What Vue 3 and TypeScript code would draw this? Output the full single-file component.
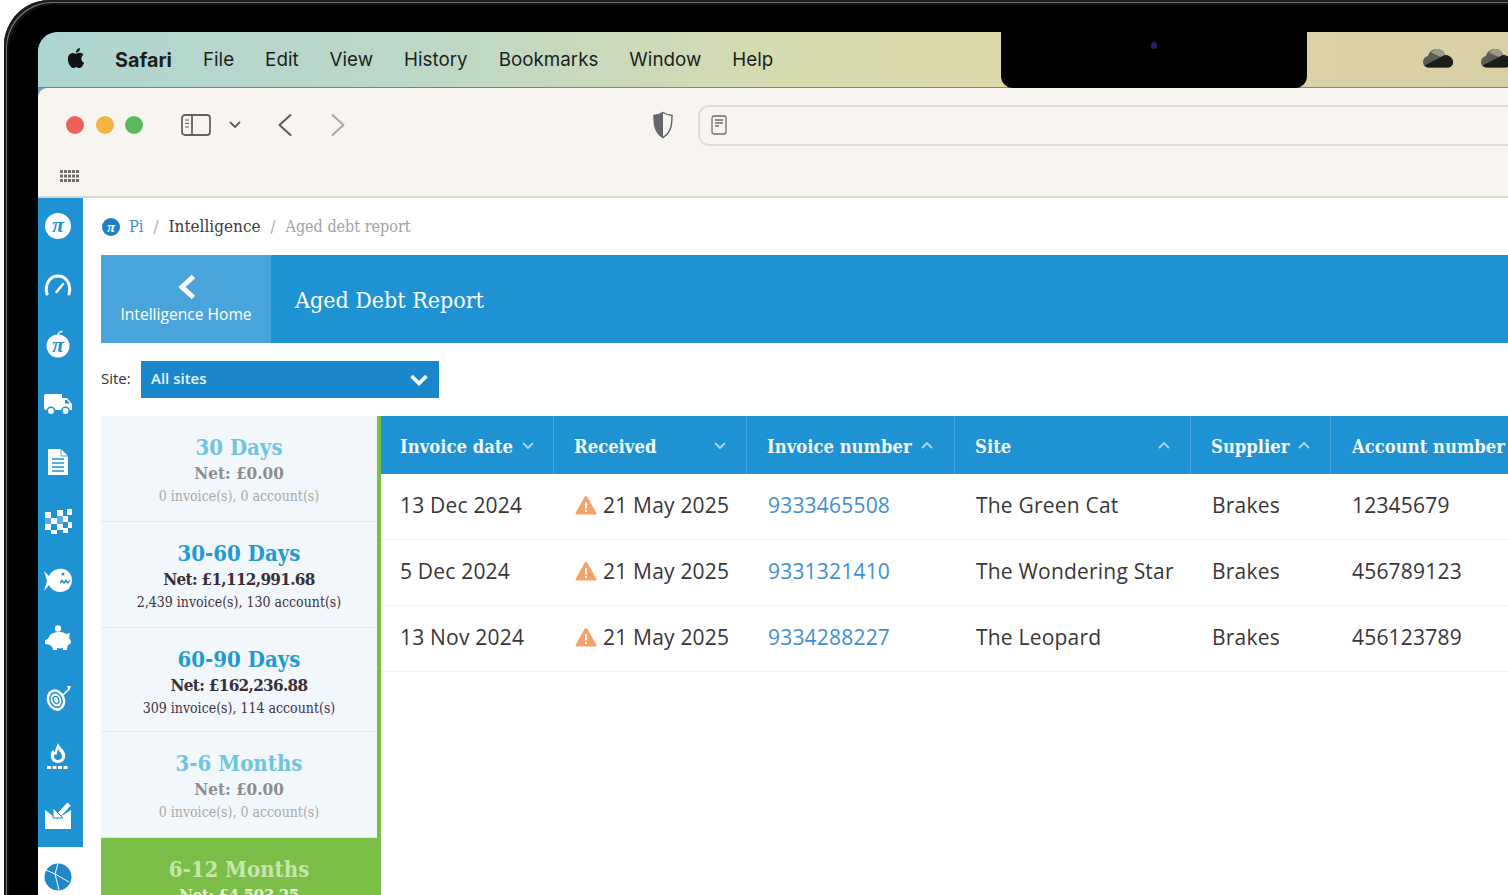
<script setup lang="ts">
interface Card { title: string; net: string; sub: string; state: 'dim' | 'on' | 'sel' }
const menus: string[] = ['File', 'Edit', 'View', 'History', 'Bookmarks', 'Window', 'Help']
const cards: Card[] = [
  { title: '30 Days', net: 'Net: £0.00', sub: '0 invoice(s), 0 account(s)', state: 'dim' },
  { title: '30-60 Days', net: 'Net: £1,112,991.68', sub: '2,439 invoice(s), 130 account(s)', state: 'on' },
  { title: '60-90 Days', net: 'Net: £162,236.88', sub: '309 invoice(s), 114 account(s)', state: 'on' },
  { title: '3-6 Months', net: 'Net: £0.00', sub: '0 invoice(s), 0 account(s)', state: 'dim' },
  { title: '6-12 Months', net: 'Net: £4,503.25', sub: '', state: 'sel' }
]
const heads = [
  { t: 'Invoice date', dir: 'down', spread: false },
  { t: 'Received', dir: 'down', spread: true },
  { t: 'Invoice number', dir: 'up', spread: false },
  { t: 'Site', dir: 'up', spread: true },
  { t: 'Supplier', dir: 'up', spread: false },
  { t: 'Account number', dir: '', spread: false }
]
const rows = [
  ['13 Dec 2024', '21 May 2025', '9333465508', 'The Green Cat', 'Brakes', '12345679'],
  ['5 Dec 2024', '21 May 2025', '9331321410', 'The Wondering Star', 'Brakes', '456789123'],
  ['13 Nov 2024', '21 May 2025', '9334288227', 'The Leopard', 'Brakes', '456123789']
]
</script>

<template>
  <div class="device">
    <div class="screen">
      <header class="menubar">
        <svg class="apple" viewBox="0 0 24 24" width="24" height="24"><path fill="#111" d="M18.710 19.500c-.83 1.240-1.710 2.450-3.050 2.470-1.340.03-1.770-.79-3.290-.79-1.530 0-2 .77-3.270.82-1.310.05-2.300-1.320-3.140-2.530C4.250 17 2.940 12.450 4.700 9.390c.87-1.520 2.430-2.480 4.120-2.510 1.280-.02 2.500.87 3.290.87.78 0 2.260-1.070 3.810-.91.65.03 2.470.26 3.640 1.980-.09.06-2.170 1.280-2.150 3.810.03 3.020 2.650 4.030 2.680 4.040-.03.07-.42 1.440-1.380 2.830M13 3.500c.73-.83 1.940-1.460 2.940-1.500.13 1.170-.34 2.350-1.040 3.190-.69.85-1.830 1.510-2.950 1.420-.15-1.150.41-2.350 1.050-3.110z"/></svg>
        <span class="app">Safari</span>
        <span v-for="m in menus" :key="m" class="menu">{{ m }}</span>
        <div class="clouds">
          <svg v-for="i in 2" :key="i" viewBox="0 0 30 20" width="30" height="20">
            <path fill="#5b5c52" d="M6 19.500C2 19.500 0 17 0 14c0-3 2-5.500 5-6C6 3.500 10 1 14 1c4 0 7 2 8 6 4 0 8 3 8 7 0 3-2 5.500-5 5.500z"/>
            <path fill="#9b9a87" d="M8 4.500C10 2 12 1 14 1c4 0 7 2 8 6l-4 2z"/>
            <path fill="#1c1d1b" d="M6 19.500c-2 0-3.500-.7-4.500-2L18 9l4-2c4 0 8 3 8 7 0 3-2 5.500-5 5.500z"/>
          </svg>
        </div>
      </header>
      <div class="notch"><i class="cam"></i></div>

      <div class="chrome">
        <div class="toolbar">
          <div class="lights"><i class="red"></i><i class="amber"></i><i class="green"></i></div>
          <svg class="side-ic" viewBox="0 0 30 24" width="30" height="24" fill="none" stroke="#626262" stroke-width="1.800">
            <rect x="1" y="2" width="28" height="20" rx="3"/><path d="M11 2v20"/>
            <path d="M4 7h4M4 10.500h4M4 14h4" stroke-width="1.200"/>
          </svg>
          <svg class="mini" viewBox="0 0 12 8" width="12" height="8" fill="none" stroke="#606060" stroke-width="1.800" stroke-linecap="round" stroke-linejoin="round"><path d="M1.500 1.500 6 6l4.500-4.500"/></svg>
          <svg class="nav" viewBox="0 0 16 24" width="16" height="24" fill="none" stroke="#5c5c5c" stroke-width="2" stroke-linecap="round" stroke-linejoin="round"><path d="M13.500 2 2.500 12l11 10"/></svg>
          <svg class="nav fwd" viewBox="0 0 16 24" width="16" height="24" fill="none" stroke="#a9a7a3" stroke-width="2" stroke-linecap="round" stroke-linejoin="round"><path d="M2.500 2 13.500 12l-11 10"/></svg>
          <svg class="shield" viewBox="0 0 22 28" width="22" height="28">
            <path fill="#f7f4ef" stroke="#66676a" stroke-width="1.500" d="M11 1.500c3 2 6 2.500 9 3 0 9.500-1 17-9 22-8-5-9-12.500-9-22 3-.5 6-1 9-3z"/>
            <path fill="#66676a" d="M11 1.500c-3 2-6 2.500-9 3 0 9.500 1 17 9 22z"/>
          </svg>
          <div class="address">
            <svg viewBox="0 0 16 20" width="16" height="20" fill="none" stroke="#6d6d6d" stroke-width="1.300"><rect x="1" y="1" width="14" height="18" rx="2"/><path d="M4 5h8M4 8h8M4 11h4"/></svg>
          </div>
        </div>
        <div class="favs">
          <svg viewBox="0 0 20 14" width="20" height="14" fill="#6d6d6d">
            <template v-for="y in [1, 5.500, 10]" :key="y">
              <rect v-for="x in [0, 4, 8, 12, 16]" :key="x" :x="x" :y="y" width="3" height="3" rx=".6"/>
            </template>
          </svg>
        </div>
      </div>

      <div class="app-body">
        <aside class="rail">
          <div class="rail-blue">
            <svg viewBox="0 0 28 28" width="28" height="28"><circle cx="14" cy="14" r="13" fill="#fff"/><text x="14" y="20" text-anchor="middle" class="pi" fill="#1f92d3">π</text></svg>
            <svg viewBox="0 0 28 28" width="28" height="28" fill="none" stroke="#fff" stroke-width="3" stroke-linecap="round"><path d="M3 23C0 12 7 5 14 5s14 7 11 18"/><path d="M12.500 21 19 13" stroke-width="2.500"/></svg>
            <svg viewBox="0 0 28 28" width="28" height="28"><circle cx="14" cy="16" r="11.500" fill="#fff"/><path d="M14 5c0-2 2-3.500 4.500-3.500" fill="none" stroke="#fff" stroke-width="1.500"/><text x="14" y="22" text-anchor="middle" class="pi" fill="#1f92d3">π</text></svg>
            <svg viewBox="0 0 28 28" width="28" height="28"><path fill="#fff" d="M2 5h15c.6 0 1 .4 1 1v3h5l5 6v6H2c-1 0-2-.5-2-2V7c0-1 1-2 2-2z"/><circle cx="7" cy="22" r="3.700" fill="#fff" stroke="#1f92d3" stroke-width="1.500"/><circle cx="21.500" cy="22" r="3.700" fill="#fff" stroke="#1f92d3" stroke-width="1.500"/><path d="M21 11h2l3 3.500h-5z" fill="#1f92d3"/></svg>
            <svg viewBox="0 0 28 28" width="28" height="28"><path fill="#fff" d="M4 1h13l7 7v19H4z"/><path d="M8 11h12M8 15h12M8 19h12M8 23h12" stroke="#1f92d3" stroke-width="1.500"/><path d="M17 1v7h7" fill="none" stroke="#1f92d3" stroke-width=".8"/></svg>
            <svg viewBox="0 0 28 28" width="28" height="28" fill="#fff"><path d="M1 5h6v6H1zM13 3h6v6h-6zM23 2h5v6h-5zM7 11h6v6H7zM19 9h5v6h-5zM1 17h6v6H1zM13 17h6v6h-6zM24 15h4v6h-4zM7 23h6v4H7zM19 21h5v5h-5z"/><path d="M1 11h6v6H1zM13 9h6v8h-6z" opacity=".25"/></svg>
            <svg viewBox="0 0 28 28" width="28" height="28"><path fill="#fff" d="M0 5l5 5c3-6 9-8 14-7 5 1 9 5 9 11 0 7-5 12-12 12-5 0-9-3-11-7l-5 6 3-10z"/><circle cx="19" cy="8" r="1.500" fill="#1f92d3"/><path d="M16 16l2-3 2 3 2-3 2 3 2-3v2l-2 3-2-2-2 2-2-2-2 2z" fill="#1f92d3"/></svg>
            <svg viewBox="0 0 28 28" width="28" height="28" fill="#fff"><circle cx="14" cy="3.500" r="3.200"/><path d="M6 10c2-2 5-3 9-3 3 0 5 .5 7 2l4-1-1 5c1 1 2 3 2 4 0 2-2 2-3 3-.5 2-1 3-1 5h-4v-2c-2 .5-4 .5-6 0v2H9c0-2-1-3-3-5-1 0-3-1-5-1v-4c2 0 4-2 5-5z"/></svg>
            <svg viewBox="0 0 28 28" width="28" height="28"><g transform="rotate(-22 12 16)"><ellipse cx="12" cy="16" rx="9" ry="11" fill="#fff"/><ellipse cx="12" cy="16" rx="5.800" ry="7.500" fill="none" stroke="#1f92d3" stroke-width="1.500"/><ellipse cx="12" cy="16" rx="2.800" ry="3.600" fill="none" stroke="#1f92d3" stroke-width="1.300"/></g><path d="M18 12 25 5" stroke="#fff" stroke-width="1.500"/><path d="M23 2h4l-2 5z" fill="#fff"/></svg>
            <svg viewBox="0 0 28 28" width="28" height="28"><path fill="#fff" d="M14 0c1 4 6 6 7 11 1 5-2 9-7 9s-8-4-7-9c0-2 1-3 2-4 1 1 1 2 2 2 0-3 2-6 3-9z"/><path fill="#1f92d3" d="M14 5c0 3 4 5 4 8.500 0 2-2 3.500-4 3.500s-4-1.500-4-3.500c0-1 .5-2 1-2.500.5.5 1 1 1.500 1 0-2 1.500-4 1.500-7z"/><path d="M3 24.500h22" stroke="#fff" stroke-width="3" stroke-dasharray="4 1.500"/></svg>
            <svg viewBox="0 0 28 28" width="28" height="28" fill="#fff"><path d="M1 8l12 9 14-9v19H1z"/><path d="M15 13 25 2" stroke="#fff" stroke-width="4.500" fill="none"/><path d="M9 6v10h10z" stroke="#1f92d3" stroke-width="1"/></svg>
          </div>
          <div class="rail-white">
            <svg viewBox="0 0 28 28" width="28" height="28"><circle cx="14" cy="14" r="13.500" fill="#1f86c8"/><path d="M14 .5 11 11l14 8M11 11 2 7M11 11l4 16" fill="none" stroke="#fff" stroke-width="1"/></svg>
          </div>
        </aside>

        <main class="main">
          <nav class="crumbs">
            <svg viewBox="0 0 18 18" width="18" height="18"><circle cx="9" cy="9" r="9" fill="#1f7fc4"/><text x="9" y="13.500" text-anchor="middle" class="pi-s" fill="#fff">π</text></svg>
            <span class="pi-link">Pi</span><span class="sep">/</span><span class="cur">Intelligence</span><span class="sep">/</span><span class="leaf">Aged debt report</span>
          </nav>

          <section class="banner">
            <div class="back">
              <svg viewBox="0 0 20 26" width="20" height="26" fill="none" stroke="#fff" stroke-width="5" stroke-linejoin="miter"><path d="M17.500 2.500 6 13l11.500 10.500"/></svg>
              <span>Intelligence Home</span>
            </div>
            <h1>Aged Debt Report</h1>
          </section>

          <div class="site-row">
            <label>Site:</label>
            <div class="select">
              <span>All sites</span>
              <svg viewBox="0 0 18 12" width="18" height="12" fill="none" stroke="#fff" stroke-width="3.600"><path d="M1.500 2 9 9.500 16.500 2"/></svg>
            </div>
          </div>

          <div class="panel">
            <div class="cards">
              <div v-for="c in cards" :key="c.title" class="card" :class="c.state">
                <div class="c-title">{{ c.title }}</div>
                <div class="c-net">{{ c.net }}</div>
                <div v-if="c.sub" class="c-sub">{{ c.sub }}</div>
              </div>
            </div>
            <div class="table">
              <div class="thead">
                <div v-for="h in heads" :key="h.t" class="th" :class="{ spread: h.spread }">
                  <span>{{ h.t }}</span>
                  <svg v-if="h.dir" viewBox="0 0 14 9" width="14" height="9" fill="none" stroke="#a9d7f2" stroke-width="1.800" :class="{ up: h.dir === 'up' }"><path d="M2 2l5 5 5-5"/></svg>
                </div>
              </div>
              <div v-for="r in rows" :key="r[2]" class="tr">
                <div class="td">{{ r[0] }}</div>
                <div class="td rec">
                  <svg viewBox="0 0 22 20" width="22" height="20"><path fill="#f4a268" d="M11 1c.6 0 1 .3 1.300.8l9 16c.5.9-.1 1.700-1 1.700H1.700c-.9 0-1.500-.8-1-1.700l9-16C10 1.300 10.400 1 11 1z"/><rect x="10" y="7" width="2" height="6.500" fill="#fff"/><rect x="10" y="15" width="2" height="2" fill="#fff"/></svg>
                  <span>{{ r[1] }}</span>
                </div>
                <div class="td link">{{ r[2] }}</div>
                <div class="td">{{ r[3] }}</div>
                <div class="td">{{ r[4] }}</div>
                <div class="td">{{ r[5] }}</div>
              </div>
            </div>
          </div>
        </main>
      </div>
    </div>
  </div>
</template>

<style>
html, body { margin: 0; height: 100%; overflow: hidden; background: #fff; }
</style>

<style scoped>
.device {
  box-sizing: border-box;
  height: 895px;
  margin-left: 4px;
  padding: 32px 0 0 34px;
  background: #000;
  border-top-left-radius: 46px;
  box-shadow: inset 2px 2px 0 #1c1c1c, inset 3px 3px 0 #6f7073, inset 5px 5px 0 #111;
  overflow: hidden;
  position: relative;
}
.screen {
  position: relative;
  height: 863px;
  background: #6f9fbb;
  border-top-left-radius: 20px;
  overflow: hidden;
  font-family: "Open Sans", sans-serif;
}
.menubar {
  height: 56px;
  display: flex;
  align-items: center;
  padding-left: 26px;
  background: linear-gradient(90deg, #aed5d1 0%, #bcd8c8 25%, #d6dbb0 50%, #dcd8a8 65%, #d9cfa5 100%);
  border-bottom: 1px solid;
  border-image: linear-gradient(90deg, #5f8d9a 0, #5f8d9a 507px, #8b8a66 507px, #8b8a66 100%) 1;
  box-sizing: border-box;
  font-family: Inter, sans-serif;
  font-size: 18.800px;
  color: #1c1f1f;
  gap: 31px;
}
.apple { margin-top: -3px; margin-right: -4px; }
.app { font-weight: 700; font-size: 19.800px; margin-right: 0; }
.clouds { position: absolute; left: 1385px; top: 16px; display: flex; gap: 28px; }
.notch {
  position: absolute;
  left: 963px;
  top: 0;
  width: 306px;
  height: 56px;
  background: #000;
  border-radius: 0 0 12px 12px;
}
.cam {
  position: absolute;
  left: 150px;
  top: 10px;
  width: 6px;
  height: 7px;
  border-radius: 50%;
  background: #23235e;
}
.chrome {
  height: 110px;
  background: #f8f5f0;
  border-bottom: 2px solid #d9d6d2;
  border-top-left-radius: 9px;
  box-sizing: border-box;
  display: flex;
  flex-direction: column;
}
.toolbar { height: 74px; display: flex; align-items: center; padding-left: 28px; }
.lights { display: flex; gap: 11.500px; }
.lights i { width: 18px; height: 18px; border-radius: 50%; display: block; }
.red { background: #f0605a; }
.amber { background: #f5b342; }
.green { background: #5cb85f; }
.side-ic { margin-left: 38px; }
.mini { margin-left: 18px; }
.nav { margin-left: 36px; }
.nav.fwd { margin-left: 37px; }
.shield { margin-left: 306px; }
.address {
  margin-left: 24px;
  flex: 1;
  height: 41px;
  border: 2px solid #dfdcd6;
  border-right: 0;
  border-radius: 11px 0 0 11px;
  display: flex;
  align-items: center;
  padding-left: 11px;
  box-sizing: border-box;
}
.favs { padding-left: 22px; padding-top: 7px; }
.favs svg { display: block; }
.app-body { display: flex; height: 697px; background: #fff; }
.rail { width: 45px; flex: none; display: flex; flex-direction: column; }
.rail-blue {
  background: #1f92d3;
  height: 649px;
  display: flex;
  flex-direction: column;
  align-items: center;
  padding: 14px 5px 0 0;
  gap: 31px;
  box-sizing: border-box;
}
.rail-blue svg, .rail-white svg { display: block; flex: none; }
.rail-white { display: flex; justify-content: center; padding: 16px 5px 0 0; }
.pi { font: italic 700 22px "Liberation Serif", serif; }
.pi-s { font: italic 700 15px "Liberation Serif", serif; }
.main { flex: 1; padding-left: 18px; min-width: 0; }
.crumbs {
  height: 57px;
  display: flex;
  align-items: center;
  font-family: "DejaVu Serif Condensed", "DejaVu Serif", serif;
  font-size: 16.300px;
  box-sizing: border-box;
  gap: 10px;
}
.crumbs svg { margin-left: 1px; }
.pi-link { color: #3f8fce; margin-left: -1px; }
.sep { color: #a9a9a9; }
.cur { color: #3c3c3c; font-size: 17px; line-height: 1; margin-top: -1px; }
.leaf { color: #a3a3a3; font-size: 16px; }
.banner {
  height: 88px;
  display: flex;
  align-items: center;
  background: #1f92d3;
}
.back {
  width: 170px;
  height: 100%;
  background: #4aa4dc;
  color: #fff;
  display: flex;
  flex-direction: column;
  align-items: center;
  justify-content: center;
  gap: 3px;
  font-size: 15.600px;
  flex: none;
  padding-top: 1px;
  box-sizing: border-box;
}
.banner h1 {
  margin: 0 0 0 24px;
  padding-top: 1px;
  color: #fff;
  font: 400 23px "DejaVu Serif Condensed", "DejaVu Serif", serif;
}
.site-row {
  display: flex;
  align-items: center;
  margin-top: 18px;
  margin-bottom: 18px;
  height: 37px;
  font-size: 15px;
  color: #333;
}
.site-row label { width: 40px; padding-bottom: 3px; }
.select {
  width: 298px;
  height: 37px;
  background: #1a86cc;
  color: #e9f4fb;
  font-weight: 600;
  font-size: 15px;
  display: flex;
  align-items: center;
  justify-content: space-between;
  padding: 0 11px 3px 10px;
  box-sizing: border-box;
}
.select svg { margin-top: 4px; }
.panel { display: flex; align-items: flex-start; }
.cards {
  width: 280px;
  flex: none;
  display: flex;
  flex-direction: column;
  box-sizing: border-box;
  border-right: 4px solid #7bbf48;
}
.card {
  height: 106px;
  box-sizing: border-box;
  background: #f1f7fb;
  border-bottom: 1px solid #e3eaee;
  text-align: center;
  padding-top: 17px;
  font-family: "DejaVu Serif Condensed", "DejaVu Serif", serif;
}
.card:nth-child(3) { height: 104px; }
.c-title { font-size: 22px; font-weight: 700; line-height: 28px; }
.c-net { font-size: 17px; font-weight: 700; line-height: 25px; }
.c-sub { font-size: 14px; line-height: 20px; }
.dim .c-title { color: #6fc4e0; }
.dim .c-net { color: #8d8d8d; }
.dim .c-sub { color: #a9a9a9; }
.on .c-title { color: #1f9bd1; }
.on .c-net { color: #3a2f38; letter-spacing: -.7px; }
.on .c-sub { color: #44323f; }
.sel { background: #7bbf48; border: 0; margin-right: -4px; padding-right: 4px; }
.sel .c-title { color: #c8e6ac; }
.sel .c-net { color: #dff0cf; letter-spacing: -.5px; }
.table { flex: 1; min-width: 0; }
.thead, .tr {
  display: grid;
  grid-template-columns: 173px 193px 208px 236px 140px 1fr;
}
.thead {
  height: 58px;
  background: #1f92d3;
}
.th {
  display: flex;
  align-items: center;
  gap: 8px;
  padding: 2px 0 0 20px;
  border-right: 1px solid #48a6de;
  color: #f2f8fc;
  font: 700 18.300px "DejaVu Serif Condensed", "DejaVu Serif", serif;
  white-space: nowrap;
  box-sizing: border-box;
}
.th svg { margin-top: -2px; }
.th:first-child { padding-left: 19px; }
.th:last-child { border-right: 0; padding-left: 21px; }
.th.spread { justify-content: space-between; padding-right: 19px; }
.th svg.up { transform: rotate(180deg); }
.tr {
  height: 66px;
  border-bottom: 1px solid #f0f0f0;
  box-sizing: border-box;
}
.td {
  display: flex;
  align-items: center;
  padding: 0 0 3px 21px;
  color: #3a3538;
  font-size: 21px;
  letter-spacing: .2px;
  white-space: nowrap;
}
.td:first-child { padding-left: 19px; }
.td.rec { gap: 6px; }
.td.link { color: #3f8fd0; }
</style>
